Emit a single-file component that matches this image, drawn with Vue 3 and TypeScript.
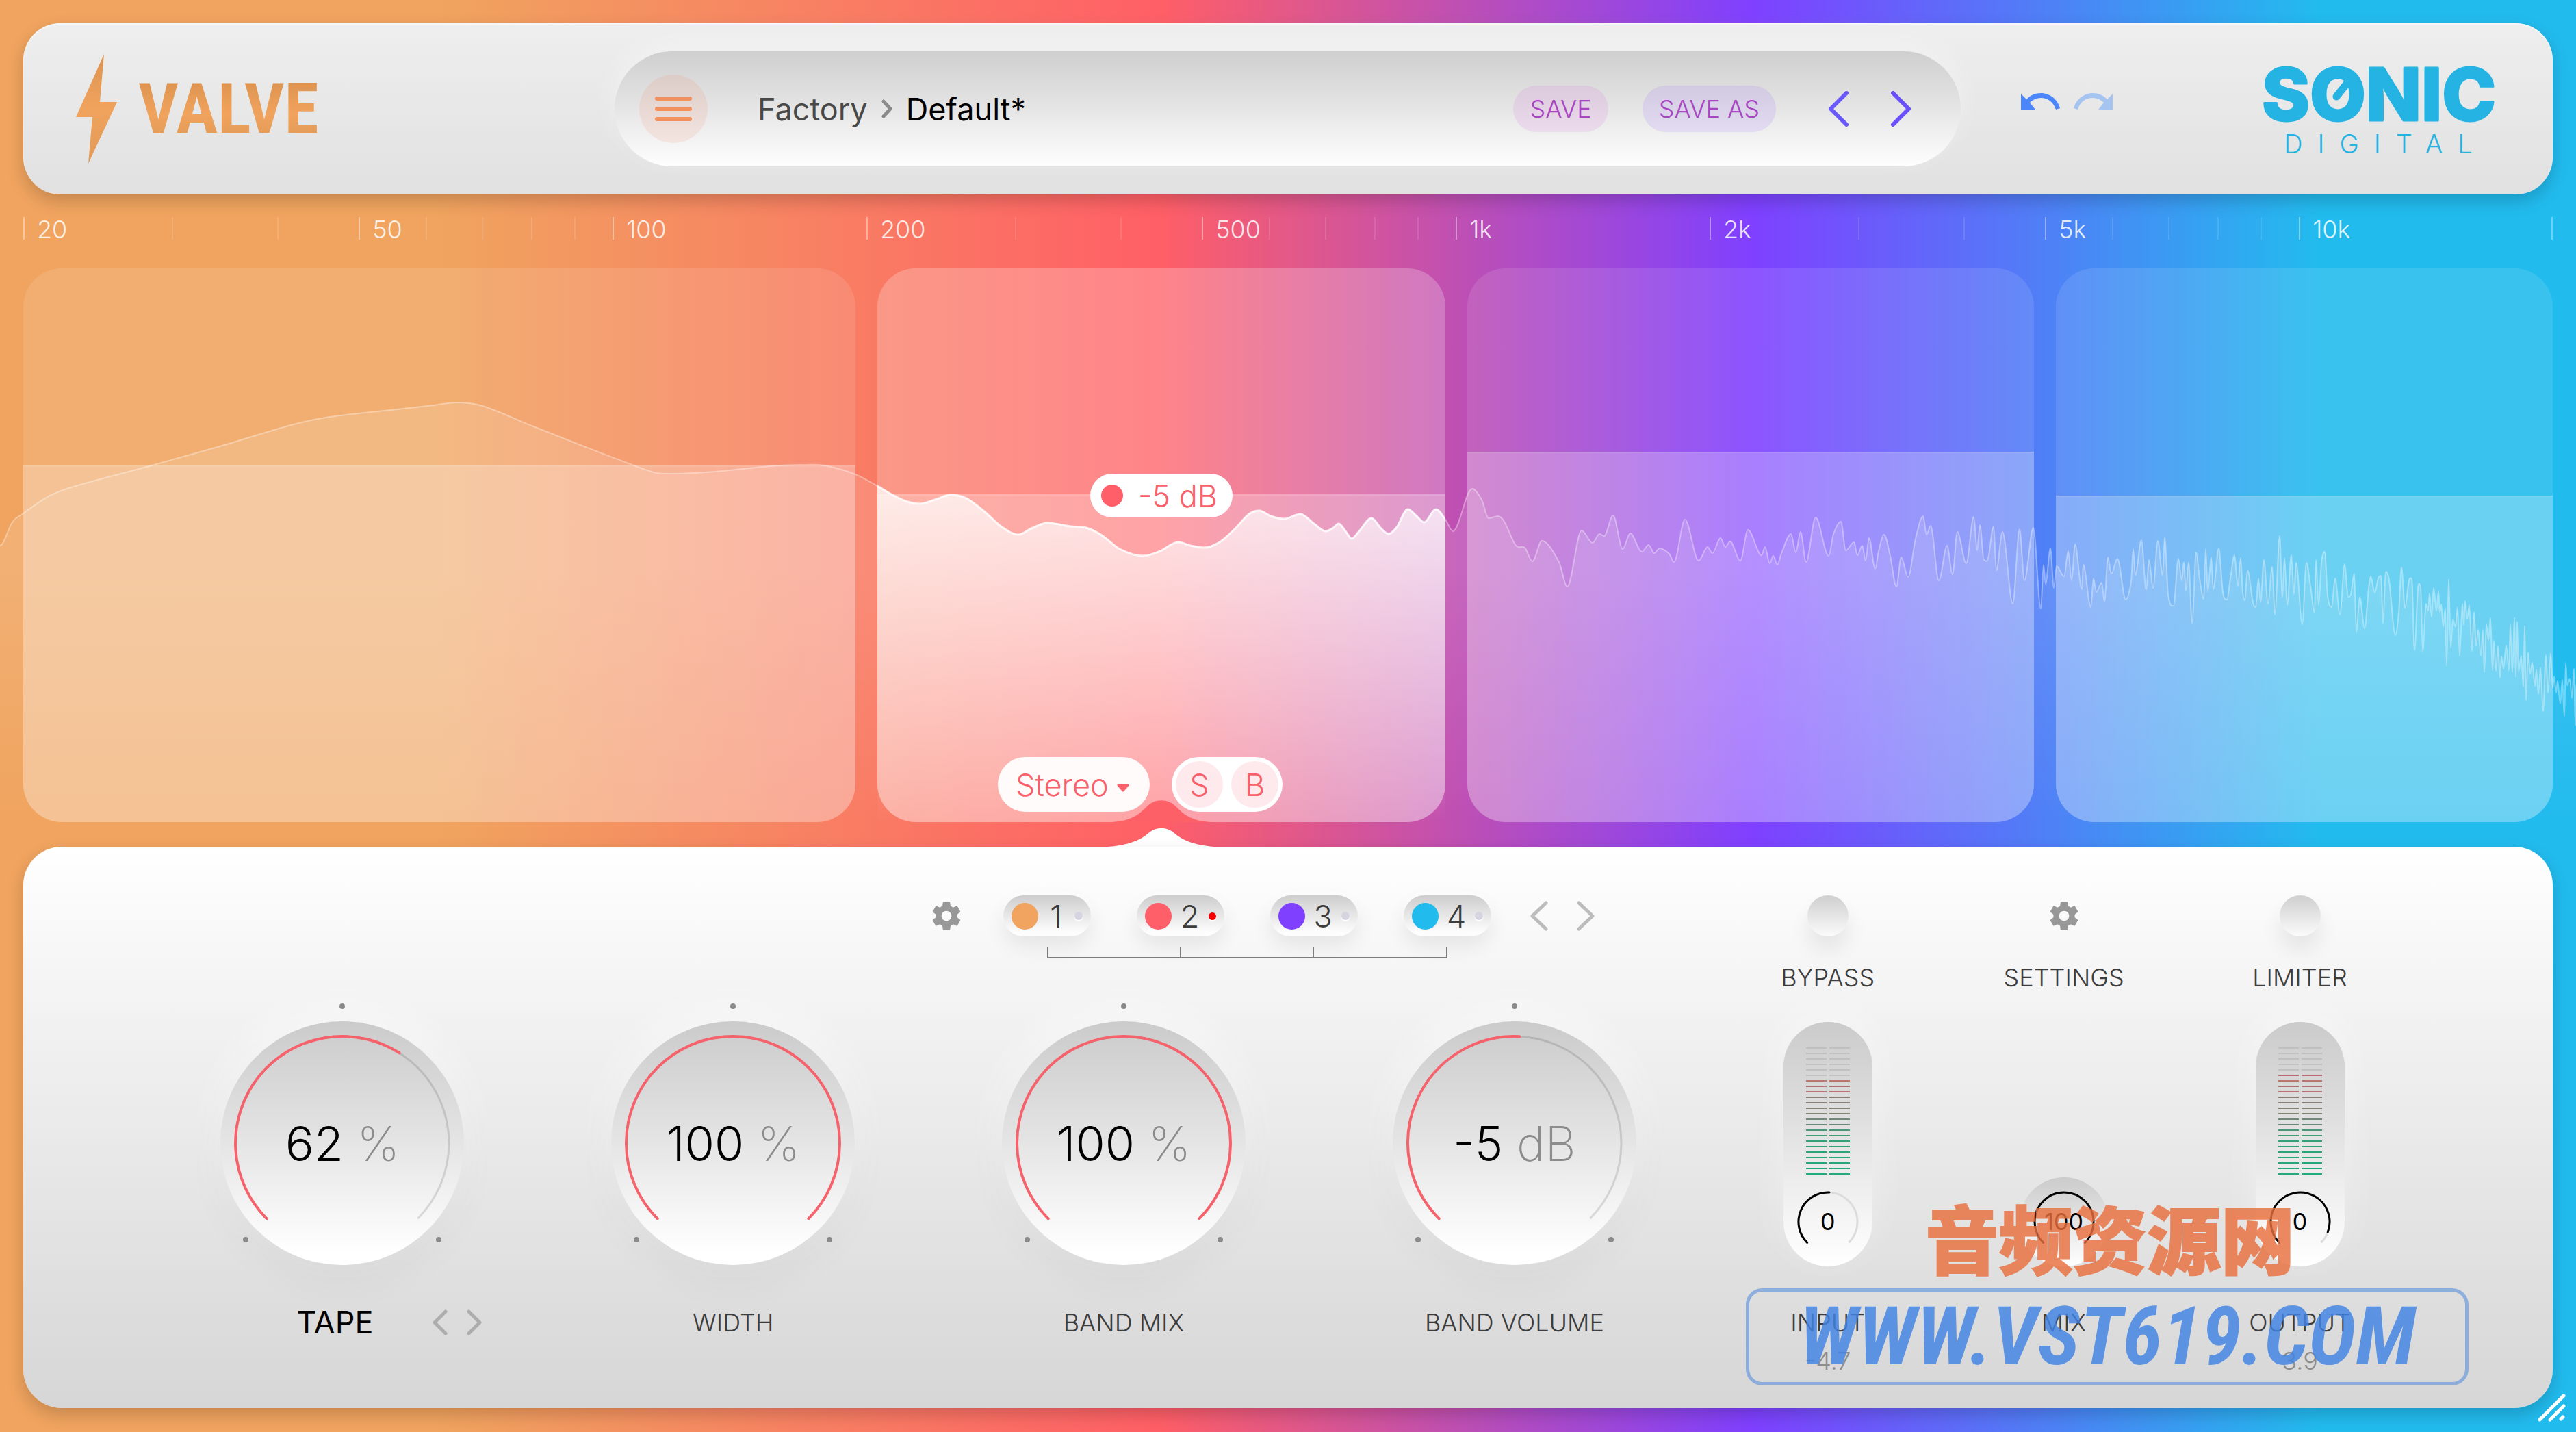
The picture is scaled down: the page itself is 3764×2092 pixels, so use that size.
<script setup lang="ts">
import { computed, ref } from 'vue'

interface Band { id: number; color: string; size: number; level: number; active?: boolean }
interface Dial { id: string; label: string; value: string; unit: string; amount: number }

const bands: Band[] = [
  { id: 1, color: '#f0a45f', size: 1216, level: 521 },
  { id: 2, color: '#ff5f69', size: 830, level: 479, active: true },
  { id: 3, color: '#7f40ff', size: 828, level: 541 },
  { id: 4, color: '#22bbee', size: 726, level: 477 },
]
const bandColumns = bands.map(b => `${b.size}fr`).join(' ')
const selected = ref(2)
const routing = ref('Stereo')

const dials: Dial[] = [
  { id: 'tape', label: 'TAPE', value: '62', unit: '%', amount: 62 },
  { id: 'width', label: 'WIDTH', value: '100', unit: '%', amount: 100 },
  { id: 'band-mix', label: 'BAND MIX', value: '100', unit: '%', amount: 100 },
  { id: 'band-volume', label: 'BAND VOLUME', value: '-5', unit: 'dB', amount: 51 },
]

/* Frequency axis: each step takes a share of the width by its log distance. */
const names: Record<number, string> = {
  20: '20', 50: '50', 100: '100', 200: '200', 500: '500',
  1000: '1k', 2000: '2k', 5000: '5k', 10000: '10k',
}
const steps: number[] = []
for (const decade of [10, 100, 1000]) {
  for (let n = 1; n < 10; n++) if (decade * n >= 20) steps.push(decade * n)
}
steps.push(10000)
const ticks = steps.map((hz, i) => ({
  hz,
  name: names[hz] ?? '',
  share: Math.round(10000 * Math.log10((steps[i + 1] ?? 20000) / hz)),
}))

/* Arc of a dial that opens downwards, 270 degrees in all. */
function arc(r: number, percent: number): string {
  const end = ((percent / 100) * 270 - 135) * Math.PI / 180
  const start = -135 * Math.PI / 180
  const p = (a: number) => `${(r * Math.sin(a)).toFixed(1)} ${(-r * Math.cos(a)).toFixed(1)}`
  return `M${p(start)}A${r} ${r} 0 ${percent > 66 ? 1 : 0} 1 ${p(end)}`
}

/* Meter segments, top to bottom. */
const ramp = [
  '#1fab7b', '#1fab7b', '#22a878', '#25a777', '#2aa576', '#2fa276', '#36a076', '#3f9d76', '#4c9777',
  '#668a78', '#6f8a79', '#838578', '#858276', '#87807a', '#8c7f79', '#b8727a', '#b96f78', '#b9776f', '#c4697a',
]
function segments(lit: number): string[] {
  return Array.from({ length: 24 }, (_, i) => (23 - i < lit ? ramp[23 - i] : '#c0c0c0'))
}
const inputMeter = segments(18)
const outputMeter = segments(19)

/* Spectrum trace. */
const measured = [
  0, 797, 18, 763, 34, 750, 71, 725, 107, 711, 214, 682, 321, 652, 429, 620, 482, 609, 571, 599, 634, 592, 668, 588,
  705, 593, 777, 622, 848, 650, 929, 681, 960, 691, 982, 692, 1045, 689, 1125, 681, 1170, 679, 1205, 680, 1250, 693,
  1282, 710, 1306, 724, 1326, 733, 1344, 736, 1366, 730, 1389, 723, 1412, 728, 1438, 747, 1464, 770, 1488, 781,
  1507, 772, 1530, 764, 1564, 769, 1587, 771, 1610, 782, 1636, 802, 1670, 812, 1693, 806, 1722, 792, 1739, 797,
  1759, 800, 1782, 792, 1805, 772, 1825, 751, 1840, 746, 1857, 754, 1876, 758, 1900, 751, 1920, 765, 1937, 776,
  1947, 772, 1956, 765, 1966, 776, 1975, 787, 1986, 776, 2004, 757, 2018, 772, 2029, 780, 2041, 770, 2057, 744,
  2069, 753, 2081, 763, 2098, 744, 2112, 759, 2123, 776, 2151, 714, 2165, 730, 2175, 757, 2189, 754, 2198, 762,
  2215, 797, 2228, 800, 2239, 820, 2253, 790, 2278, 821, 2290, 857, 2311, 775, 2327, 793, 2337, 780, 2344, 783,
  2357, 753, 2371, 802, 2382, 779, 2399, 806, 2409, 796, 2417, 808, 2425, 801, 2439, 809, 2446, 821, 2462, 759,
  2482, 819, 2495, 799, 2502, 808, 2514, 786, 2521, 799, 2528, 791, 2543, 819, 2554, 774, 2574, 811, 2579, 799,
  2586, 823, 2591, 812, 2597, 825, 2603, 808, 2617, 780, 2624, 807, 2631, 777, 2639, 821, 2653, 756, 2672, 812,
  2679, 780, 2690, 762, 2697, 804, 2709, 792, 2714, 811, 2721, 797, 2726, 819, 2731, 786, 2740, 831, 2745, 805,
  2753, 781, 2762, 812, 2771, 857, 2778, 814, 2788, 843, 2799, 787, 2810, 754, 2815, 781, 2821, 768, 2833, 848,
  2845, 797, 2853, 839, 2860, 777, 2873, 823, 2884, 755, 2889, 804, 2893, 767, 2899, 818, 2905, 816, 2913, 769,
  2917, 833, 2926, 777, 2941, 882, 2951, 773, 2958, 848, 2971, 771, 2982, 889, 2986, 825, 2989, 853, 2996, 801,
  3001, 859, 3005, 827, 3016, 842, 3022, 805, 3027, 848, 3032, 795, 3042, 861, 3044, 825, 3055, 887, 3059, 845,
  3063, 865, 3071, 851, 3075, 879, 3080, 814, 3085, 838, 3094, 816, 3106, 876, 3114, 849, 3117, 802, 3120, 840,
  3129, 789, 3136, 862, 3140, 818, 3146, 859, 3153, 790, 3160, 840, 3163, 785, 3168, 868, 3176, 885, 3183, 816,
  3188, 848, 3191, 821, 3194, 863, 3198, 821, 3203, 911, 3209, 807, 3214, 845, 3220, 875, 3223, 802, 3226, 864,
  3231, 814, 3234, 861, 3242, 801, 3248, 865, 3254, 876, 3259, 845, 3265, 811, 3270, 856, 3274, 815, 3277, 865,
  3280, 877, 3284, 833, 3292, 880, 3296, 887, 3300, 845, 3303, 880, 3308, 818, 3314, 882, 3320, 828, 3324, 898,
  3331, 783, 3335, 872, 3338, 815, 3342, 884, 3348, 811, 3352, 868, 3355, 822, 3364, 912, 3370, 822, 3376, 856,
  3382, 895, 3384, 818, 3388, 884, 3392, 822, 3397, 806, 3401, 870, 3407, 887, 3412, 845, 3419, 898, 3426, 824,
  3431, 872, 3435, 868, 3440, 838, 3443, 924, 3448, 872, 3455, 918, 3461, 860, 3464, 842, 3470, 866, 3475, 845,
  3479, 841, 3482, 911, 3486, 835, 3491, 848, 3500, 928, 3505, 895, 3509, 829, 3514, 888, 3520, 848, 3524, 845,
  3528, 950, 3533, 860, 3537, 856, 3540, 952, 3545, 882,
]
const trend = [[3540, 885], [3580, 900], [3620, 910], [3650, 952], [3700, 975], [3764, 1005]]

const trace = computed(() => {
  const pts: [number, number][] = []
  for (let i = 0; i < measured.length; i += 2) pts.push([measured[i], measured[i + 1]])
  let seed = 11
  const random = () => (seed = (seed * 16807) % 2147483647) / 2147483647
  let up = false
  let drift = 0
  let x = 3548
  while (x < 3764) {
    const k = Math.max(0, trend.findIndex(t => t[0] >= x) - 1)
    const [x0, y0] = trend[k]
    const [x1, y1] = trend[k + 1]
    const mid = y0 + (y1 - y0) * (x - x0) / (x1 - x0)
    drift = drift * 0.7 + (random() - 0.5) * 26
    const swing = 8 + 64 * random() * random()
    pts.push([x, Math.round(mid + drift + (up ? -swing : swing))])
    up = !up
    x += 2 + Math.round(random() * 2)
  }
  pts.push([3764, 1000])
  let d = `M${pts[0][0]} ${pts[0][1]}`
  for (let i = 0; i < pts.length - 1; i++) {
    const a = pts[Math.max(0, i - 1)]
    const b = pts[i]
    const c = pts[i + 1]
    const e = pts[Math.min(pts.length - 1, i + 2)]
    const w = (c[0] - b[0]) / 3
    const slope = (p: number[], q: number[], r: number[]) =>
      (q[1] - p[1]) * (r[1] - q[1]) <= 0 ? 0 : (r[1] - p[1]) / Math.max(1, r[0] - p[0])
    d += `C${(b[0] + w).toFixed(1)} ${(b[1] + w * slope(a, b, c)).toFixed(1)} ${(c[0] - w).toFixed(1)} ${(c[1] - w * slope(b, c, e)).toFixed(1)} ${c[0]} ${c[1]}`
  }
  return d
})
const traceArea = computed(() => `${trace.value}V1201H0Z`)

const gear = 'M19.14 12.94c.04-.3.06-.61.06-.94s-.02-.64-.07-.94l2.03-1.58a.5.5 0 0 0 .12-.61l-1.92-3.32a.49.49 0 0 0-.59-.22l-2.39.96a7 7 0 0 0-1.62-.94l-.36-2.54a.48.48 0 0 0-.48-.41h-3.84a.47.47 0 0 0-.47.41l-.36 2.54c-.59.24-1.13.57-1.62.94l-2.39-.96a.48.48 0 0 0-.59.22L2.74 8.87a.47.47 0 0 0 .12.61l2.03 1.58c-.05.3-.09.63-.09.94s.02.64.07.94l-2.03 1.58a.5.5 0 0 0-.12.61l1.92 3.32c.12.22.37.29.59.22l2.39-.96c.5.38 1.03.7 1.62.94l.36 2.54c.05.24.24.41.48.41h3.84c.24 0 .44-.17.47-.41l.36-2.54c.59-.24 1.13-.56 1.62-.94l2.39.96c.22.08.47 0 .59-.22l1.92-3.32a.47.47 0 0 0-.12-.61zM12 15.4a3.4 3.4 0 1 1 0-6.8 3.4 3.4 0 0 1 0 6.8z'
</script>

<template>
  <div class="plugin">
    <header class="topbar">
      <h1 class="brand">
        <svg class="bolt" width="60" height="160" viewBox="0 0 60 160" aria-hidden="true">
          <path d="M41 0 35 70H60L18 160 24 92H0Z" fill="url(#bolt)" />
          <defs>
            <linearGradient id="bolt" x1="0" y1="0" x2="0" y2="1">
              <stop offset="0" stop-color="#dc934f" /><stop offset=".5" stop-color="#f0a35d" /><stop offset="1" stop-color="#e09a57" />
            </linearGradient>
          </defs>
        </svg>
        <span class="brand-name">VALVE</span>
      </h1>

      <nav class="presets" aria-label="Presets">
        <button class="menu" type="button" aria-label="Menu"><i /><i /><i /></button>
        <p class="path">
          <span class="folder">Factory</span>
          <svg width="16" height="28" viewBox="0 0 16 28" aria-hidden="true"><path d="M3 3 13 14 3 25" fill="none" stroke="#8b8b8b" stroke-width="5" stroke-linecap="round" stroke-linejoin="round" /></svg>
          <span>Default*</span>
        </p>
        <button class="save" type="button">SAVE</button>
        <button class="save as" type="button">SAVE AS</button>
        <div class="step">
          <button class="plain" type="button" aria-label="Previous preset">
            <svg width="30" height="52" viewBox="0 0 30 52"><path d="M27 3 4 26 27 49" fill="none" stroke="#6a59fa" stroke-width="6" stroke-linecap="round" stroke-linejoin="round" /></svg>
          </button>
          <button class="plain" type="button" aria-label="Next preset">
            <svg width="30" height="52" viewBox="0 0 30 52"><path d="M3 3 26 26 3 49" fill="none" stroke="#6a50fb" stroke-width="6" stroke-linecap="round" stroke-linejoin="round" /></svg>
          </button>
        </div>
      </nav>

      <div class="tail">
        <div class="history">
          <button class="plain" type="button" aria-label="Undo">
            <svg width="58" height="26" viewBox="0 0 58 26"><path d="M0 1 8 9C14 3 21 0 29 0 43 0 54 10 57 22L51 24C48 14 40 7 29 7 23 7 17 10 13 14L21 24H0Z" fill="#4b86fb" /></svg>
          </button>
          <button class="plain" type="button" aria-label="Redo" disabled>
            <svg width="58" height="26" viewBox="0 0 58 26"><path d="M58 1 50 9C44 3 37 0 29 0 15 0 4 10 1 22L7 24C10 14 18 7 29 7 35 7 41 10 45 14L37 24H58Z" fill="#a6c4f0" /></svg>
          </button>
        </div>
        <svg class="maker" width="400" height="180" viewBox="0 0 400 180" role="img" aria-label="Sonic Digital">
          <text class="sonic" x="200" y="107">SONIC</text>
          <path d="M138 72 154 52" stroke="#24b3e2" stroke-width="11" stroke-linecap="round" />
          <text class="digital" x="210" y="155">DIGITAL</text>
        </svg>
      </div>
    </header>

    <div class="axis">
      <span v-for="t in ticks" :key="t.hz" class="tick" :class="{ named: t.name }" :style="{ flexGrow: t.share }">{{ t.name }}</span>
    </div>

    <main class="stage">
      <div class="bands" :style="{ gridTemplateColumns: bandColumns }">
        <section v-for="b in bands" :key="b.id" class="band" :class="{ active: b.active }">
          <div class="level" :style="{ height: b.level + 'px' }" />
        </section>
      </div>

      <svg class="trace" viewBox="0 392 3764 809" preserveAspectRatio="none" aria-hidden="true">
        <defs>
          <linearGradient id="soft" gradientUnits="userSpaceOnUse" x1="0" y1="590" x2="0" y2="1201">
            <stop offset="0" stop-color="#fff" stop-opacity=".13" /><stop offset=".4" stop-color="#fff" stop-opacity=".13" /><stop offset="1" stop-color="#fff" stop-opacity="0" />
          </linearGradient>
          <linearGradient id="strong" gradientUnits="userSpaceOnUse" x1="0" y1="710" x2="0" y2="1201">
            <stop offset="0" stop-color="#fff" stop-opacity=".76" /><stop offset="1" stop-color="#fff" stop-opacity="0" />
          </linearGradient>
          <clipPath id="current"><path d="M1282 392H2112V1201H1282Z" /></clipPath>
          <clipPath id="others"><path d="M0 392H1282V1201H0ZM2112 392H3764V1201H2112Z" /></clipPath>
        </defs>
        <g clip-path="url(#others)">
          <path :d="traceArea" fill="url(#soft)" />
          <path :d="trace" fill="none" stroke="#fff" stroke-opacity=".36" stroke-width="2" />
        </g>
        <g clip-path="url(#current)">
          <path :d="traceArea" fill="url(#strong)" />
          <path :d="trace" fill="none" stroke="#fff" stroke-opacity=".85" stroke-width="3" />
        </g>
      </svg>

      <div class="overlay" :style="{ gridTemplateColumns: bandColumns }">
        <div class="band-tools">
          <div class="gain"><i />-5 dB</div>
          <div class="modes">
            <div class="routing">
              <select v-model="routing" aria-label="Channel routing">
                <option>Stereo</option><option>Mid</option><option>Side</option>
              </select>
              <svg width="18" height="12" viewBox="0 0 18 12" aria-hidden="true"><path d="M2 2H16L9 10Z" fill="#f8616b" stroke="#f8616b" stroke-width="3" stroke-linejoin="round" /></svg>
            </div>
            <div class="switches">
              <button type="button" aria-label="Solo">S</button>
              <button type="button" aria-label="Bypass band">B</button>
            </div>
          </div>
          <svg class="notch" width="144" height="32" viewBox="0 0 144 32" aria-hidden="true"><path d="M0 32C28 30 38 22 50 10 62-3 82-3 94 10 106 22 116 30 144 32Z" fill="#fe6067" /></svg>
          <svg class="pointer" width="192" height="28" viewBox="0 0 192 28" aria-hidden="true"><path d="M0 28C40 27 62 20 76 8 88-3 104-3 116 8 130 20 152 27 192 28Z" fill="#fff" /></svg>
        </div>
      </div>
    </main>

    <section class="panel">
      <div class="shaping">
        <div class="selector">
          <button class="plain cog" type="button" aria-label="Band settings"><svg width="52" height="52" viewBox="0 0 24 24"><path :d="gear" fill="#989898" /></svg></button>
          <div class="chips">
            <button v-for="b in bands" :key="b.id" class="chip" type="button" :aria-pressed="selected === b.id" @click="selected = b.id">
              <i class="swatch" :style="{ background: b.color }" /><span>{{ b.id }}</span><i class="lamp" :class="{ on: selected === b.id }" />
            </button>
          </div>
          <div class="step small">
            <button class="plain" type="button" aria-label="Previous band">
              <svg width="26" height="44" viewBox="0 0 26 44"><path d="M23 3 3 22 23 41" fill="none" stroke="#bcbcbc" stroke-width="5" stroke-linecap="round" stroke-linejoin="round" /></svg>
            </button>
            <button class="plain" type="button" aria-label="Next band">
              <svg width="26" height="44" viewBox="0 0 26 44"><path d="M3 3 23 22 3 41" fill="none" stroke="#bcbcbc" stroke-width="5" stroke-linecap="round" stroke-linejoin="round" /></svg>
            </button>
          </div>
          <div class="bracket"><i /><i /><i /></div>
        </div>

        <div class="dials">
          <div v-for="d in dials" :key="d.id" class="dial-cell">
            <div class="dial">
              <div class="cap" />
              <svg width="420" height="420" viewBox="-210 -210 420 420" aria-hidden="true">
                <path :d="arc(156, 100)" fill="none" stroke="#000" stroke-opacity=".12" stroke-width="3" />
                <path :d="arc(156, d.amount)" fill="none" stroke="#f5626c" stroke-width="4" stroke-linecap="round" />
                <g fill="#8a8a8a"><circle cy="-200" r="4" /><circle cx="-141" cy="141" r="4" /><circle cx="141" cy="141" r="4" /></g>
              </svg>
              <output class="reading" :for="d.id">{{ d.value }} <span>{{ d.unit }}</span></output>
              <input :id="d.id" type="range" min="0" max="100" :value="d.amount">
            </div>
            <div class="caption">
              <label :for="d.id" :class="{ main: d.id === 'tape' }">{{ d.label }}</label>
              <div v-if="d.id === 'tape'" class="types">
                <button class="plain" type="button" aria-label="Previous type">
                  <svg width="24" height="38" viewBox="0 0 24 38"><path d="M20 3 4 19 20 35" fill="none" stroke="#adadad" stroke-width="5" stroke-linecap="round" stroke-linejoin="round" /></svg>
                </button>
                <button class="plain" type="button" aria-label="Next type">
                  <svg width="24" height="38" viewBox="0 0 24 38"><path d="M4 3 20 19 4 35" fill="none" stroke="#adadad" stroke-width="5" stroke-linecap="round" stroke-linejoin="round" /></svg>
                </button>
              </div>
            </div>
          </div>
        </div>
      </div>

      <div class="global">
        <div class="channel">
          <button id="bypass" class="round" type="button" />
          <label for="bypass">BYPASS</label>
          <div class="meter">
            <div class="bars"><template v-for="(c, i) in inputMeter" :key="i"><i :style="{ background: c }" /><i :style="{ background: c }" /></template></div>
            <div class="mini">
              <svg width="100" height="100" viewBox="-50 -50 100 100" aria-hidden="true"><path :d="arc(43, 100)" class="rest" /><path :d="arc(43, 51)" class="lit" /></svg>
              <output for="input">0</output><input id="input" type="range" min="0" max="100" value="51">
            </div>
          </div>
          <label class="foot" for="input">INPUT</label>
          <span class="peak">-4.7</span>
        </div>
        <div class="channel">
          <button id="settings" class="plain cog" type="button"><svg width="52" height="52" viewBox="0 0 24 24" aria-hidden="true"><path :d="gear" fill="#989898" /></svg></button>
          <label for="settings">SETTINGS</label>
          <div class="meter bare">
            <div class="mini disc">
              <svg width="100" height="100" viewBox="-50 -50 100 100" aria-hidden="true"><path :d="arc(43, 100)" class="lit" /></svg>
              <output for="mix">100</output><input id="mix" type="range" min="0" max="100" value="100">
            </div>
          </div>
          <label class="foot" for="mix">MIX</label>
        </div>
        <div class="channel">
          <button id="limiter" class="round" type="button" />
          <label for="limiter">LIMITER</label>
          <div class="meter">
            <div class="bars"><template v-for="(c, i) in outputMeter" :key="i"><i :style="{ background: c }" /><i :style="{ background: c }" /></template></div>
            <div class="mini">
              <svg width="100" height="100" viewBox="-50 -50 100 100" aria-hidden="true"><path :d="arc(43, 100)" class="rest" /><path :d="arc(43, 91)" class="lit" /></svg>
              <output for="output">0</output><input id="output" type="range" min="0" max="100" value="91">
            </div>
          </div>
          <label class="foot" for="output">OUTPUT</label>
          <span class="peak">3.9</span>
        </div>
      </div>

      <div class="stamp">
        <p class="stamp-name" lang="zh">音频资源网</p>
        <p class="stamp-site">WWW.VST619.COM</p>
      </div>
    </section>

    <svg class="grip" width="42" height="42" viewBox="0 0 42 42" aria-hidden="true"><path d="M3 38 38 3M18 38 38 18M34 37 37 34" fill="none" stroke="#fff" stroke-width="5" stroke-linecap="round" /></svg>
  </div>
</template>

<style>
body { margin: 0; }
</style>

<style scoped>
.plugin {
  position: relative;
  box-sizing: border-box;
  min-height: 100vh;
  padding: 34px 0 35px;
  font-family: Inter, "Noto Sans", "Noto Sans CJK SC", sans-serif;
  font-size: 36px;
  color: #3c3c3c;
  background: linear-gradient(90deg, #f0a45f 17%, #ff5f66 45%, #7f40ff 68%, #22bbee 90%);
  overflow: hidden;
}
.plugin * { box-sizing: border-box; }
p, h1 { margin: 0; font-weight: 400; }
button, select, input { font: inherit; color: inherit; margin: 0; padding: 0; border: 0; background: none; }
svg { display: block; }
i { display: block; }
label { font-weight: 300; }
.plain { display: flex; align-items: center; justify-content: center; }

/* Top bar */
.topbar {
  display: grid;
  grid-template-columns: 864fr 1967fr 865fr;
  align-items: center;
  height: 250px;
  margin: 0 34px;
  border-radius: 54px;
  background: linear-gradient(#eeeeee, #e1e1e1);
  box-shadow: 0 10px 24px rgba(0, 0, 0, .18), inset 0 2px 2px rgba(255, 255, 255, .6);
}
.brand { display: flex; align-items: center; gap: 31px; padding-left: 77px; }
.brand-name {
  font: 700 102px/140px "Roboto Condensed", "Open Sans Condensed", "Noto Sans CJK SC", sans-serif;
  background: linear-gradient(#dc934f 20%, #f0a35d 55%, #e09a57 85%);
  background-clip: text;
  color: transparent;
}
.presets {
  display: flex;
  align-items: center;
  height: 168px;
  padding: 0 72px 0 36px;
  border-radius: 84px;
  background: linear-gradient(#cfcfcf, #e3e3e3 45%, #fefefe);
  box-shadow: 0 -14px 40px rgba(255, 255, 255, .35);
}
.menu {
  display: flex;
  flex-direction: column;
  align-items: center;
  justify-content: center;
  gap: 9px;
  width: 100px;
  height: 100px;
  border-radius: 50%;
  background: rgba(255, 120, 80, .12);
}
.menu i { width: 54px; height: 6px; border-radius: 3px; background: #f2905e; }
.path { display: flex; align-items: center; gap: 20px; flex: 1; padding-left: 73px; font-size: 45px; color: #000; }
.folder { color: #484848; }
.save {
  height: 68px;
  padding: 0 24px;
  margin-right: 50px;
  border-radius: 34px;
  color: #a845c2;
  background: rgba(215, 80, 225, .13);
  font-weight: 300;
}
.save.as { margin-right: 76px; background: rgba(140, 70, 255, .12); }
.step { display: flex; gap: 62px; }
.tail { display: flex; align-items: center; justify-content: space-between; padding: 0 54px 0 88px; }
.history { display: flex; gap: 18px; padding-bottom: 20px; }
.sonic {
  font: 800 106px Inter, sans-serif;
  text-anchor: middle;
  fill: #24b3e2;
  stroke: #24b3e2;
  stroke-width: 3;
  stroke-linejoin: round;
}
.digital { font: 300 38px Inter, sans-serif; text-anchor: middle; letter-spacing: 22px; fill: #24b3e2; }

/* Frequency axis */
.axis { display: flex; height: 33px; margin: 33px 34px 42px; box-shadow: inset -2px 0 rgba(255, 255, 255, .35); }
.tick {
  flex: 1 0 0;
  min-width: 0;
  height: 33px;
  text-indent: 20px;
  line-height: 37px;
  color: rgba(255, 255, 255, .85);
  font-weight: 300;
  white-space: nowrap;
  box-shadow: inset 2px 0 rgba(255, 255, 255, .12);
}
.tick.named { box-shadow: inset 2px 0 rgba(255, 255, 255, .4); }

/* Band view */
.stage { position: relative; height: 809px; margin-bottom: 36px; }
.bands, .overlay { display: grid; gap: 32px; height: 100%; padding: 0 34px; }
.band {
  display: flex;
  flex-direction: column;
  justify-content: flex-end;
  overflow: hidden;
  border-radius: 56px;
  background: rgba(255, 255, 255, .11);
}
.band.active { background: rgba(255, 255, 255, .23); }
.level { background: rgba(255, 255, 255, .25); border-top: 2px solid rgba(255, 255, 255, .1); }
.trace { position: absolute; inset: 0; width: 100%; height: 100%; pointer-events: none; }
.overlay { position: absolute; inset: 0; }
.band-tools {
  grid-column: 2;
  position: relative;
  display: flex;
  flex-direction: column;
  align-items: center;
  justify-content: space-between;
  padding: 300px 0 15px;
  color: #f8616b;
  font-size: 45px;
}
.gain { display: flex; align-items: center; gap: 22px; height: 64px; padding: 0 22px 0 16px; border-radius: 32px; background: #fff; font-weight: 300; }
.gain i { width: 32px; height: 32px; border-radius: 50%; background: #ff5f69; }
.modes { display: flex; gap: 32px; padding-right: 62px; z-index: 1; font-weight: 300; }
.routing { display: grid; align-items: center; width: 222px; height: 80px; border-radius: 40px; background: #fffbfa; }
.routing > * { grid-area: 1 / 1; }
.routing select { appearance: none; width: 100%; height: 80px; padding-left: 26px; }
.routing svg { justify-self: end; margin: 10px 30px 0 0; }
.switches { display: flex; gap: 12px; padding: 6px; border-radius: 40px; background: #fff; }
.switches button { width: 69px; height: 68px; border-radius: 34px; background: #feeaec; }
.notch { position: absolute; left: calc(50% - 72px); bottom: 0; }
.pointer { position: absolute; left: calc(50% - 96px); bottom: -37px; }

/* Lower panel */
.panel {
  position: relative;
  display: grid;
  grid-template-columns: 2284fr 1035fr;
  margin: 0 34px;
  padding: 71px 197px 47px 181px;
  border-radius: 56px;
  background: linear-gradient(#fff, #f4f4f4 25%, #d6d6d6);
  box-shadow: 0 10px 24px rgba(0, 0, 0, .18);
}
.selector {
  display: grid;
  grid-template-columns: 52px 713px auto;
  justify-content: start;
  align-items: center;
  column-gap: 57px;
  row-gap: 16px;
  padding-left: 50%;
}
.cog { width: 52px; height: 60px; }
.chips { display: flex; justify-content: space-between; }
.chip {
  display: flex;
  align-items: center;
  width: 128px;
  height: 60px;
  padding: 0 12px;
  border-radius: 30px;
  font-size: 45px;
  font-weight: 300;
  background: linear-gradient(#cdcdcd, #fdfdfd 90%);
  box-shadow: 0 14px 30px rgba(0, 0, 0, .08), 0 -4px 8px rgba(255, 255, 255, .8);
}
.chip span { flex: 1; }
.swatch { width: 39px; height: 39px; border-radius: 50%; }
.lamp { width: 12px; height: 12px; border-radius: 50%; background: #d6d4e0; box-shadow: 0 2px 2px #fff; }
.lamp.on { width: 11px; height: 11px; background: #f00000; }
.step.small { gap: 42px; }
.bracket { grid-column: 2; display: flex; height: 16px; margin: 0 64px; border: 2px solid #7c7c7c; border-top: 0; }
.bracket i { flex: 1; }
.bracket i + i { border-left: 2px solid #7c7c7c; }
.dials { display: grid; grid-template-columns: repeat(4, 1fr); margin-top: 60px; }
.dial-cell { display: flex; flex-direction: column; align-items: center; gap: 30px; }
.dial { display: grid; place-items: center; }
.dial > * { grid-area: 1 / 1; }
.cap {
  width: 356px;
  height: 356px;
  border-radius: 50%;
  background: linear-gradient(#cbcbcb, #e2e2e2 45%, #fff 95%);
  box-shadow: 0 -24px 60px rgba(255, 255, 255, .45), 0 24px 60px rgba(0, 0, 0, .04);
}
.reading { font-size: 70px; font-weight: 300; color: #000; }
.reading span { color: #8c8c8c; font-weight: 200; }
.dial input { width: 356px; height: 356px; opacity: 0; }
.caption { display: grid; grid-template-columns: 1fr auto 1fr; width: 100%; height: 44px; line-height: 44px; align-items: center; }
.caption label { grid-column: 2; }
.caption .main { padding-right: 22px; font-size: 45px; font-weight: 400; color: #000; }
.types { display: flex; gap: 26px; padding-left: 64px; }

.global { display: grid; grid-template-columns: repeat(3, 1fr); }
.channel { display: flex; flex-direction: column; align-items: center; line-height: 44px; }
.channel > label:first-of-type { margin: 38px 0 43px; }
.round {
  width: 60px;
  height: 60px;
  border-radius: 50%;
  background: linear-gradient(#cfcfcf, #fbfbfb);
  box-shadow: 0 20px 30px rgba(0, 0, 0, .08);
}
.meter {
  display: flex;
  flex-direction: column;
  align-items: center;
  justify-content: space-between;
  width: 130px;
  height: 357px;
  padding-top: 37px;
  border-radius: 65px;
  background: linear-gradient(#cbcbcb, #e2e2e2 45%, #fff);
  box-shadow: 0 -20px 60px rgba(255, 255, 255, .35);
}
.meter.bare { justify-content: flex-end; background: none; box-shadow: none; }
.bars { display: grid; grid-template-columns: 30px 30px; gap: 6px 4px; }
.bars i { height: 2px; }
.mini { display: grid; place-items: center; width: 130px; height: 130px; border-radius: 50%; color: #000; }
.mini > * { grid-area: 1 / 1; }
.mini output { font-size: 34px; }
.mini input { width: 100px; height: 100px; opacity: 0; }
.disc { background: linear-gradient(#cbcbcb, #e2e2e2 45%, #fff); }
.rest { fill: none; stroke: #dcdcdc; stroke-width: 3px; }
.lit { fill: none; stroke: #000; stroke-width: 3px; stroke-linecap: round; }
.foot { margin: 60px 0 12px; }
.peak { color: #8c8c8c; font-weight: 300; }

/* Site stamp that floats over the output section */
.stamp { position: absolute; right: 123px; bottom: 33px; width: 1056px; pointer-events: none; opacity: .82; }
.stamp-name {
  margin: 0 0 0 262px;
  padding-bottom: 6px;
  font: 900 108px/140px "Noto Sans CJK SC", sans-serif;
  color: #e9703e;
  -webkit-text-stroke: 2px #e9703e;
  white-space: nowrap;
}
.stamp-site {
  height: 142px;
  border: 5px solid #7ba3dd;
  border-radius: 24px;
  text-align: center;
  font: italic 700 118px/132px "Roboto Condensed", "Open Sans Condensed", "Noto Sans CJK SC", sans-serif;
  color: #4083e4;
  white-space: nowrap;
}
.grip { position: absolute; right: 14px; bottom: 14px; }
</style>
